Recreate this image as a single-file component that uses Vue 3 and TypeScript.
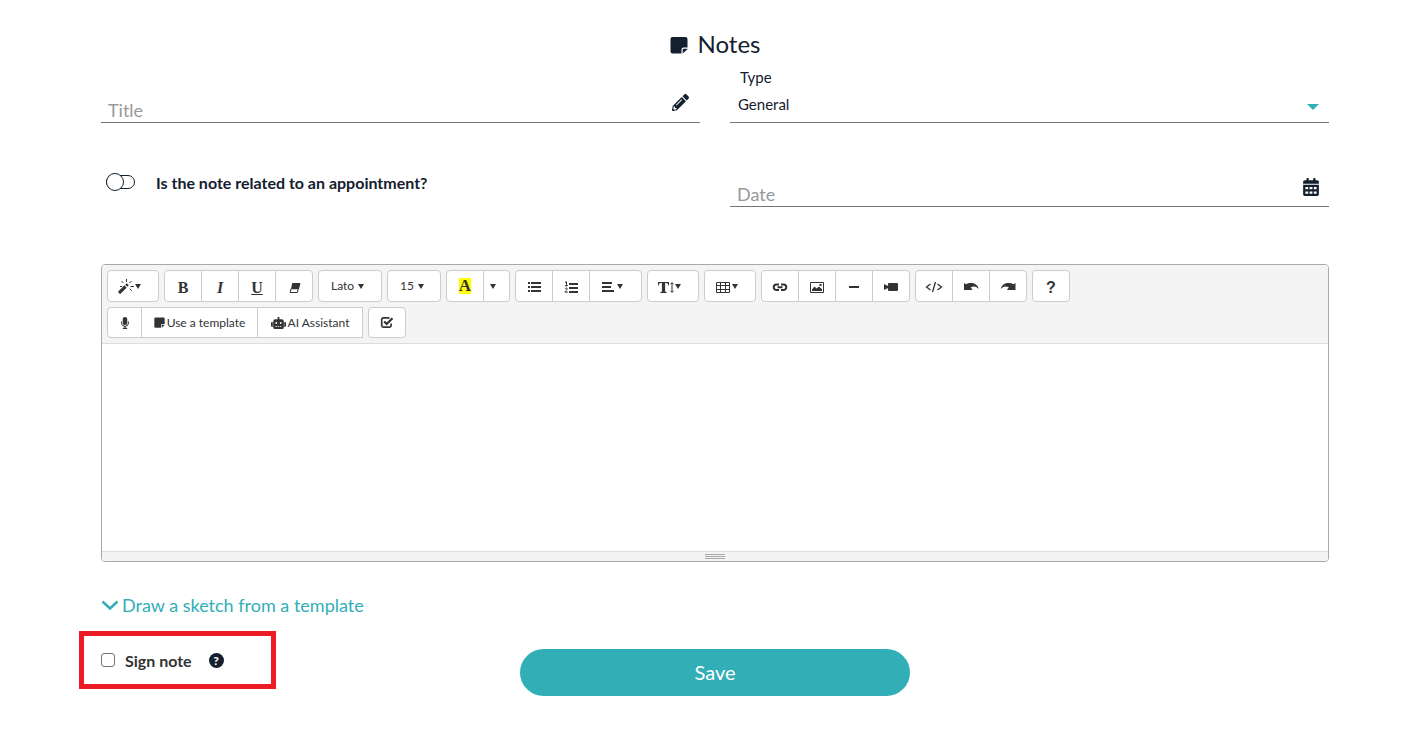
<script setup lang="ts">
import { h, ref } from 'vue'

interface Shape {
  d: string
  stroke?: number
}

interface IconDef {
  box: string
  shapes: Shape[]
}

interface ToolButton {
  label: string
  icon?: string
  glyph?: string
  text?: string
  caret?: boolean
  kind?: string
}

const icons: Record<string, IconDef> = {
  note: {
    box: '0 0 18 18',
    shapes: [
      { d: 'M2.500 1h13a2 2 0 0 1 2 2v8.500h-4a2 2 0 0 0-2 2v4h-9a2 2 0 0 1-2-2v-12.500a2 2 0 0 1 2-2z' },
      { d: 'M12.700 17.500v-3.800a1 1 0 0 1 1-1h3.800v.5z' },
    ],
  },
  pencil: {
    box: '0 0 512 512',
    shapes: [
      {
        d: 'M497.9 142.1l-46.1 46.1c-4.7 4.7-12.3 4.7-17 0l-111-111c-4.7-4.7-4.7-12.3 0-17l46.1-46.1c18.7-18.7 49.1-18.7 67.9 0l60.1 60.1c18.8 18.7 18.8 49.1 0 67.9zM284.2 99.8L21.6 362.4.4 483.9c-2.9 16.4 11.4 30.6 27.8 27.8l121.5-21.3 262.6-262.6c4.7-4.7 4.7-12.3 0-17l-111-111c-4.8-4.7-12.4-4.7-17.1 0zM124.1 339.9c-5.5-5.5-5.5-14.3 0-19.8l154-154c5.5-5.5 14.3-5.5 19.8 0s5.5 14.3 0 19.8l-154 154c-5.5 5.5-14.3 5.5-19.8 0zM88 424h48v36.3l-64.5 11.3-31.1-31.1L51.7 376H88v48z',
      },
    ],
  },
  calendar: {
    box: '0 0 448 512',
    shapes: [
      {
        d: 'M0 464c0 26.500 21.500 48 48 48h352c26.500 0 48-21.500 48-48V192H0v272zM64 256h80v64h-80zM184 256h80v64h-80zM304 256h80v64h-80zM64 384h80v64h-80zM184 384h80v64h-80zM304 384h80v64h-80z',
      },
      {
        d: 'M400 64h-48V16c0-8.800-7.200-16-16-16h-32c-8.800 0-16 7.200-16 16v48H160V16c0-8.800-7.200-16-16-16h-32c-8.800 0-16 7.200-16 16v48H48C21.500 64 0 85.500 0 112v48h448v-48c0-26.500-21.500-48-48-48z',
      },
    ],
  },
  robot: {
    box: '0 0 640 512',
    shapes: [
      {
        d: 'M0 224H64V416H32A32 32 0 0 1 0 384ZM544 176V448a64 64 0 0 1-64 64H160a64 64 0 0 1-64-64V176a80 80 0 0 1 80-80H280V32a40 40 0 0 1 80 0V96H464A80 80 0 0 1 544 176ZM264 256a40 40 0 1 0-40 40A40 40 0 0 0 264 256ZM256 384H192v32h64ZM352 384H288v32h64ZM456 256a40 40 0 1 0-40 40A40 40 0 0 0 456 256ZM448 384H384v32h64ZM640 224V384a32 32 0 0 1-32 32H576V224Z',
      },
      { d: 'M60 224h40v192h-40zM540 224h40v192h-40z' },
    ],
  },
  wand: {
    box: '0 0 16 16',
    shapes: [
      { d: 'M1 15L7.500 8.500', stroke: 3.2 },
      { d: 'M8.200 7.800L9.800 6.200', stroke: 2.8 },
      { d: 'M8.500 1v3M3.500 3l1.800 1.800M13.500 3l-2 2M12.500 8.500h3.500M11.800 10.800l1.900 1.900M2 8.500h2', stroke: 1 },
    ],
  },
  eraser: {
    box: '0 0 16 16',
    shapes: [
      { d: 'M6.800 5h6.700a.8.8 0 0 1 .8 1l-1.400 5.300h-8l1.100-5.300a1 1 0 0 1 .8-1z' },
      { d: 'M4.900 11l-.8 3.500h7.200l.9-3.500', stroke: 1 },
    ],
  },
  bullets: {
    box: '0 0 16 16',
    shapes: [{ d: 'M2 4h2v2h-2zM5 4h10v2h-10zM2 8h2v2h-2zM5 8h10v2h-10zM2 12h2v2h-2zM5 12h10v2h-10z' }],
  },
  numbers: {
    box: '0 0 16 16',
    shapes: [
      { d: 'M6 5h9v2h-9zM6 9h9v2h-9zM6 13h9v2h-9z' },
      { d: 'M2 4.500l1.500-.8v4M2 7.700h3M2 10.800c.5-1.200 2.500-1 2.300.3c-.1 1-2.300 1.800-2.400 3h3', stroke: 1 },
    ],
  },
  align: {
    box: '0 0 16 16',
    shapes: [{ d: 'M2 4h10v2h-10zM2 8h9v2h-9zM2 12h12v2h-12z' }],
  },
  lineheight: {
    box: '0 0 16 16',
    shapes: [
      { d: 'M0 4h11v3.500h-.7c-.2-1.700-.8-2.400-2.200-2.400h-1v8c0 .7.4.9 1.500 1v.9h-6.200v-.9c1.100-.1 1.500-.3 1.500-1v-8h-1c-1.400 0-2 .7-2.200 2.400h-.7z' },
      { d: 'M14 5v9M12.500 6.200l1.500-1.700 1.500 1.700M12.500 12.800l1.500 1.700 1.500-1.700', stroke: 1 },
    ],
  },
  table: {
    box: '0 0 16 16',
    shapes: [{ d: 'M1.500 4.500h13v10h-13zM1.500 7.500h13M1.500 11.500h13M5.500 4.500v10M10.500 4.500v10', stroke: 1 }],
  },
  link: {
    box: '0 0 16 16',
    shapes: [
      { d: 'M7 6.500h-2.500a2.700 2.700 0 0 0 0 5.500h2.500M9 6.500h2.500a2.700 2.700 0 0 1 0 5.500h-2.500M5.500 9.200h5', stroke: 2 },
    ],
  },
  picture: {
    box: '0 0 16 16',
    shapes: [
      { d: 'M1.500 4.500h13v10h-13z', stroke: 1 },
      { d: 'M3 13v-1.500l2.500-3 2 2 2.500-2 3 2.800v1.700zM10.500 6h2v2h-2z' },
    ],
  },
  minus: { box: '0 0 16 16', shapes: [{ d: 'M3 8h10v2h-10z' }] },
  video: {
    box: '0 0 16 16',
    shapes: [{ d: 'M6 5h8a1 1 0 0 1 1 1v6a1 1 0 0 1-1 1h-8a1 1 0 0 1-1-1v-6a1 1 0 0 1 1-1zM1 6l4 2v2l-4 2z' }],
  },
  code: {
    box: '0 0 18 16',
    shapes: [{ d: 'M5.500 6l-4 3 4 3M12.500 6l4 3-4 3M10.500 4l-3 10', stroke: 1.3 }],
  },
  undo: {
    box: '0 0 16 16',
    shapes: [{ d: 'M1 5l2 1.300c4-2.300 11.500-1.800 12.700 4.700c-2.500-3-5.200-3.200-8-1.700l1.800 2.700h-8.500z' }],
  },
  redo: {
    box: '0 0 16 16',
    shapes: [{ d: 'M15.500 5l-2 1.300c-4-2.300-11.500-1.800-12.700 4.700c2.500-3 5.200-3.200 8-1.700l-1.800 2.700h8.500z' }],
  },
  mic: {
    box: '0 0 10 12',
    shapes: [
      { d: 'M5 0a2.300 2.300 0 0 1 2.300 2.300v3.400a2.300 2.300 0 0 1-4.600 0v-3.400a2.300 2.300 0 0 1 2.300-2.300zM2.800 10.700h4.400v1.300h-4.400z' },
      { d: 'M1.500 4.500v1.300a3.500 3.500 0 0 0 7 0v-1.300M5 9v2', stroke: 1 },
    ],
  },
  check: {
    box: '0 0 14 13',
    shapes: [
      { d: 'M9.500 1.800h-6.200a1.600 1.600 0 0 0-1.600 1.600v6.200a1.600 1.600 0 0 0 1.600 1.600h6.200a1.600 1.600 0 0 0 1.600-1.600v-2', stroke: 1.7 },
      { d: 'M4.200 5.500l2.500 2.500 5.800-5.800', stroke: 2.2 },
    ],
  },
  chevron: { box: '0 0 18 16', shapes: [{ d: 'M1.500 4.500l7.500 7 7.500-7', stroke: 2.5 }] },
}

const Icon = (props: { name: string }) =>
  h(
    'svg',
    { viewBox: icons[props.name].box, 'aria-hidden': 'true' },
    icons[props.name].shapes.map((s) =>
      s.stroke
        ? h('path', { d: s.d, fill: 'none', stroke: 'currentColor', 'stroke-width': s.stroke })
        : h('path', { d: s.d, fill: 'currentColor', 'fill-rule': 'evenodd' }),
    ),
  )
Icon.props = ['name']

const rows: ToolButton[][][] = [
  [
    [{ label: 'Style', icon: 'wand', caret: true, kind: 'menu' }],
    [
      { label: 'Bold', glyph: 'B', kind: 'bold' },
      { label: 'Italic', glyph: 'I', kind: 'italic' },
      { label: 'Underline', glyph: 'U', kind: 'underline' },
      { label: 'Remove formatting', icon: 'eraser' },
    ],
    [{ label: 'Font family', text: 'Lato', caret: true, kind: 'family' }],
    [{ label: 'Font size', text: '15', caret: true, kind: 'size' }],
    [
      { label: 'Recent color', glyph: 'A', kind: 'color' },
      { label: 'More colors', caret: true, kind: 'narrow' },
    ],
    [
      { label: 'Unordered list', icon: 'bullets' },
      { label: 'Ordered list', icon: 'numbers' },
      { label: 'Paragraph', icon: 'align', caret: true, kind: 'menu' },
    ],
    [{ label: 'Line height', icon: 'lineheight', caret: true, kind: 'menu' }],
    [{ label: 'Table', icon: 'table', caret: true, kind: 'menu' }],
    [
      { label: 'Link', icon: 'link' },
      { label: 'Picture', icon: 'picture' },
      { label: 'Horizontal rule', icon: 'minus' },
      { label: 'Video', icon: 'video' },
    ],
    [
      { label: 'Code view', icon: 'code', kind: 'code' },
      { label: 'Undo', icon: 'undo' },
      { label: 'Redo', icon: 'redo' },
    ],
    [{ label: 'Help', glyph: '?', kind: 'help' }],
  ],
  [
    [
      { label: 'Dictate', icon: 'mic', kind: 'mic' },
      { label: 'Use a template', icon: 'note', text: 'Use a template', kind: 'template' },
      { label: 'AI Assistant', icon: 'robot', text: 'AI Assistant', kind: 'robot' },
    ],
    [{ label: 'Checklist', icon: 'check', kind: 'check' }],
  ],
]

const title = ref('')
const type = ref('General')
const related = ref(false)
const date = ref('')
const body = ref('')
const signed = ref(false)
</script>

<template>
  <form class="page" @submit.prevent>
    <h1><Icon name="note" class="title-icon" />Notes</h1>

    <div class="fields">
      <div class="field">
        <input v-model="title" type="text" placeholder="Title" aria-label="Title" />
        <Icon name="pencil" class="pencil" />
      </div>
      <div class="field type">
        <label for="note-type">Type</label>
        <div class="select">
          <select id="note-type" v-model="type">
            <option>General</option>
          </select>
          <span class="arrow"></span>
        </div>
      </div>
      <label class="related">
        <input v-model="related" type="checkbox" role="switch" />
        <span>Is the note related to an appointment?</span>
      </label>
      <div class="field">
        <input v-model="date" type="text" placeholder="Date" aria-label="Date" />
        <Icon name="calendar" class="calendar" />
      </div>
    </div>

    <section class="editor">
      <div class="toolbar">
        <div v-for="(row, r) in rows" :key="r" class="row">
          <div v-for="(group, g) in row" :key="g" class="group">
            <button
              v-for="b in group"
              :key="b.label"
              type="button"
              :class="['tool', b.kind]"
              :aria-label="b.label"
            >
              <Icon v-if="b.icon" :name="b.icon" class="icon" />
              <span v-if="b.glyph" class="glyph">{{ b.glyph }}</span>
              <span v-if="b.text">{{ b.text }}</span>
              <span v-if="b.caret" class="caret"></span>
            </button>
          </div>
        </div>
      </div>
      <textarea v-model="body" aria-label="Note"></textarea>
      <div class="grip"><i></i><i></i><i></i></div>
    </section>

    <a class="sketch" href="#"><Icon name="chevron" class="chevron" />Draw a sketch from a template</a>

    <div class="actions">
      <div class="sign">
        <label><input v-model="signed" type="checkbox" />Sign note</label>
        <button type="button" class="hint" aria-label="About signing">?</button>
      </div>
      <button type="submit" class="save">Save</button>
    </div>
  </form>
</template>

<style>
body {
  margin: 0;
  background: #fff;
}
</style>

<style scoped>
.page,
.page * {
  box-sizing: border-box;
}
.page {
  padding: 28px 81px 40px 101px;
  font-family: Lato, 'Liberation Sans', sans-serif;
  font-size: 15px;
  color: #14202e;
}
input,
select,
button,
textarea {
  font-family: inherit;
  color: inherit;
  margin: 0;
}
h1 {
  display: flex;
  justify-content: center;
  align-items: center;
  gap: 10px;
  margin: 0;
  padding-bottom: 2px;
  font-size: 24px;
  line-height: 32px;
  font-weight: 400;
}
.title-icon {
  width: 18px;
  height: 18px;
  margin-top: 2px;
}
.fields {
  display: grid;
  grid-template-columns: 1fr 1fr;
  grid-template-rows: 61px 84px;
  column-gap: 30px;
}
.field {
  display: flex;
  align-items: flex-end;
  border-bottom: 1px solid #757575;
}
.field input {
  flex: 1;
  min-width: 0;
  height: 24px;
  padding: 0 7px;
  border: 0;
  outline: 0;
  background: transparent;
  font-size: 18px;
}
.field input::placeholder {
  color: #999;
  opacity: 1;
}
.pencil {
  width: 17px;
  height: 17px;
  margin: 0 11px 11px 0;
}
.calendar {
  width: 16px;
  height: 18px;
  margin: 0 10px 10px 0;
}
.type {
  flex-direction: column;
  align-items: stretch;
  justify-content: flex-end;
}
.type label {
  padding-left: 10px;
  line-height: 20px;
}
.select {
  display: flex;
  align-items: center;
  height: 35px;
}
.select select {
  flex: 1;
  height: 35px;
  padding: 0 8px 2px;
  border: 0;
  outline: 0;
  appearance: none;
  background: transparent;
  font-size: 15px;
}
.arrow {
  margin: 4px 10px 0 0;
  border: 6px solid transparent;
  border-top-color: #32aeb7;
  border-bottom: 0;
}
.related {
  display: flex;
  align-items: center;
  align-self: end;
  padding: 0 0 14px 5px;
  font-size: 16px;
  font-weight: 700;
}
.related input {
  appearance: none;
  display: flex;
  align-items: center;
  width: 29px;
  height: 14px;
  margin-right: 21px;
  border: 1px solid #14202e;
  border-radius: 7px;
}
.related input::before {
  content: '';
  flex: none;
  width: 16px;
  height: 16px;
  margin-left: -1px;
  border: 1px solid #14202e;
  border-radius: 50%;
  background: #fff;
}
.related input:checked::before {
  margin-left: 12px;
}
.related span {
  line-height: 20px;
  padding-top: 2px;
}
.editor {
  margin-top: 57px;
  border: 1px solid #a9a9a9;
  border-radius: 4px;
  overflow: hidden;
}
.toolbar {
  display: flex;
  flex-direction: column;
  gap: 5px;
  padding: 5px;
  background: #f4f4f4;
  border-bottom: 1px solid #ddd;
}
.row {
  display: flex;
  flex-wrap: wrap;
  gap: 5px;
}
.group {
  display: flex;
}
.tool {
  display: flex;
  align-items: center;
  justify-content: center;
  width: 38px;
  height: 32px;
  padding: 0;
  border: 1px solid #ccc;
  background: #fff;
  color: #333;
  font-size: 12px;
  line-height: 16px;
  white-space: nowrap;
}
.row:last-child .tool {
  height: 31px;
}
.tool + .tool {
  margin-left: -1px;
}
.tool:first-child {
  border-top-left-radius: 4px;
  border-bottom-left-radius: 4px;
}
.tool:last-child {
  border-top-right-radius: 4px;
  border-bottom-right-radius: 4px;
}
.icon {
  flex: none;
  width: 16px;
  height: 16px;
}
.caret {
  border: 3px solid transparent;
  border-top: 5px solid #333;
  border-bottom: 0;
}
.tool.menu {
  width: 52px;
  justify-content: flex-start;
  padding-left: 10px;
  gap: 1px;
}
.tool.menu:not(:first-child) {
  width: 53px;
}
.tool.family,
.tool.size {
  justify-content: flex-start;
  padding-left: 12px;
  gap: 4px;
}
.tool.family {
  width: 64px;
}
.tool.size {
  width: 54px;
}
.tool.narrow {
  width: 27px;
  padding-right: 7px;
}
.tool.code .icon {
  width: 18px;
}
.glyph {
  font-family: 'Liberation Serif', serif;
  font-size: 16px;
  font-weight: 700;
  padding-top: 3px;
}
.italic .glyph {
  font-style: italic;
}
.underline .glyph {
  text-decoration: underline;
}
.color .glyph {
  padding: 0;
  background: #ff0;
  font-size: 17px;
}
.help .glyph {
  font-family: 'Liberation Sans', sans-serif;
}
.tool.mic {
  width: 35px;
}
.mic .icon {
  width: 10px;
  height: 12px;
}
.tool.template {
  width: 117px;
  gap: 2px;
}
.template .icon {
  width: 11px;
  height: 11px;
}
.tool.robot {
  width: 106px;
  gap: 2px;
  border-radius: 0;
}
.robot .icon {
  width: 15px;
  height: 12px;
}
.check .icon {
  width: 14px;
  height: 13px;
}
textarea {
  display: block;
  width: 100%;
  height: 207px;
  padding: 10px;
  border: 0;
  outline: 0;
  resize: none;
  background: #fff;
  font-size: 15px;
}
.grip {
  display: flex;
  flex-direction: column;
  align-items: center;
  gap: 1px;
  height: 10px;
  padding-top: 2px;
  border-top: 1px solid #ddd;
  background: #f4f4f4;
}
.grip i {
  width: 20px;
  height: 1px;
  background: #a9a9a9;
}
.sketch {
  display: flex;
  align-items: center;
  width: fit-content;
  gap: 3px;
  margin-top: 31px;
  color: #32aeb7;
  font-size: 18px;
  line-height: 24px;
  text-decoration: none;
}
.chevron {
  width: 18px;
  height: 16px;
}
.actions {
  display: grid;
  grid-template-columns: repeat(3, 1fr);
  align-items: start;
  margin-top: 14px;
}
.sign {
  display: flex;
  align-items: center;
  width: 197px;
  height: 58px;
  margin-left: -22px;
  padding-left: 17px;
  border: 5px solid #ed1c24;
  color: #333;
}
.sign label {
  display: flex;
  align-items: center;
  font-size: 16px;
  font-weight: 700;
}
.sign input {
  appearance: none;
  width: 14px;
  height: 14px;
  margin-right: 10px;
  border: 1px solid #767676;
  border-radius: 3px;
  background: #fff;
}
.sign input:checked {
  background: #32aeb7;
}
.hint {
  width: 15px;
  height: 15px;
  margin-left: 17px;
  padding: 0;
  border: 0;
  border-radius: 50%;
  background: #14202e;
  color: #fff;
  font-size: 12px;
  font-weight: 900;
  line-height: 15px;
}
.save {
  height: 47px;
  margin: 18px 10px 0;
  padding: 0 0 2px;
  border: 0;
  border-radius: 24px;
  background: #32aeb7;
  color: #fff;
  font-size: 20px;
}
</style>
